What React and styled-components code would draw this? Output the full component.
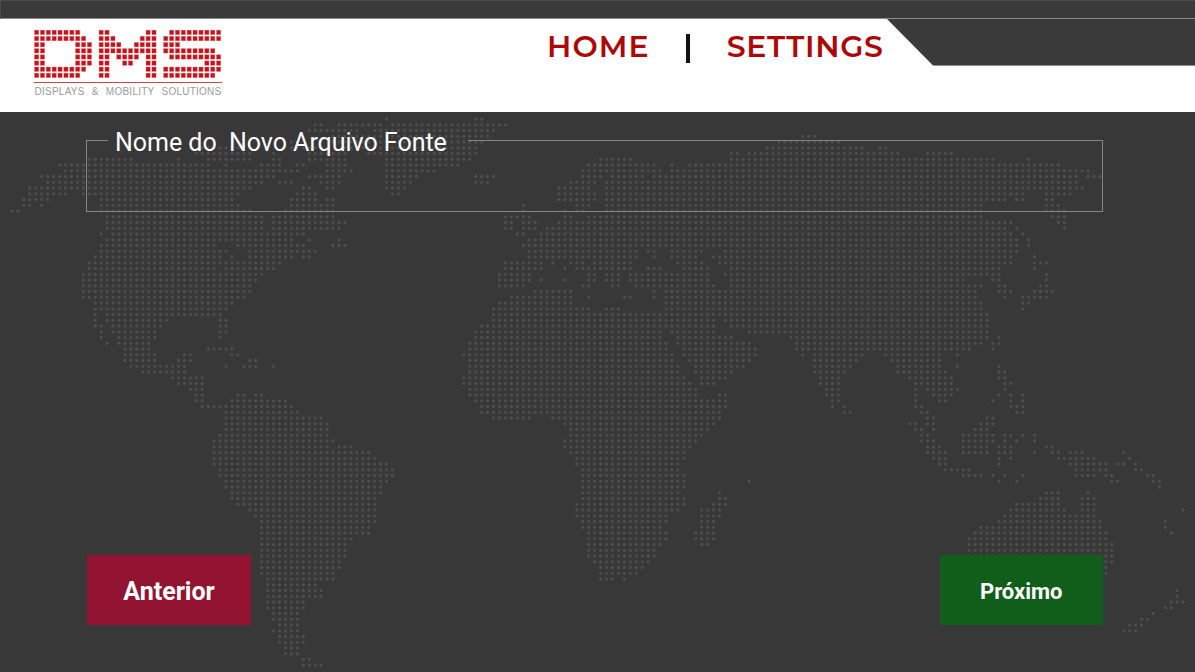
import React from "react";
import styled, { createGlobalStyle } from "styled-components";

const GlobalStyle = createGlobalStyle`
  html, body { margin: 0; padding: 0; background: #383838; }
  body { font-family: "Roboto", "Liberation Sans", sans-serif; }
`;

const northAmerica = `20:1160
38:940-965,1015-1150,1170-1200
56:925-980,995-1075,1120-1200
74:1000-1200
92:880-900,1000-1200
106:600-710,880-985,1040-1200
124:585-755,820,925-1040,1100-1200
142:260-395,535,625-755,820-840,925-1040,1160-1200
159:178-630,675,785-840,890-910,980-1040,1160-1200
177:195-895,980-1055,1160-1200
194:125-825,925-1020,1160-1200
211:140-790,835-875,960-1020,1160-1200
228:85-755,905-925,980-1000,1160-1200
245:85-195,250-720,890-945,1175-1200
262:70-145,300-700,870-945,980-1000
280:70-90,125,300-715,870-1000
297:36-52,300-750,855-1000
314:320-785,820-1000
331:320-785,820-1035
349:320-785,820-1020
366:303,338-915
383:320-880,920-930,1017
401:303-645,715-915,1000-1035
418:303-680,750-945
435:285-660,695,750-875,910-930
452:267-660,680-840
470:267-645,680-825
487:250-790
504:250-770
521:250-750
538:250-750
555:250-735
573:285-700
590:285-680
607:285,320-665
625:285,320-500,660-680
642:285-305,338-485,660-680
659:303,338-465,660-680
676:303,355-465,660
694:320,355-450
711:373-450,625-695
728:373-465,555-575,695-715
745:373-465,535-575,750-770
763:390-555,680,732-770,820
780:425-555
797:517-610
814:535-610
832:570-610`;

const southAmerica = `10:535-605
27:570-605
45:588-605,715-730,768-785
62:588-605,695-855
79:605-875
97:678-890
114:678-965
131:678-980
148:678-980
165:660-980
183:642-1000
200:642-985,1015-1050
217:642-1105
235:642-1120
252:642-1160
269:660-1178
286:660-1178
303:678-1160
320:678-1140
337:695-1140
355:695-1125
372:715-1125
389:750-1125
406:768-1125
424:785-1125
441:785-1105
459:785-1105
476:785-1050
493:785-1035
510:785-1035
527:785-1035
545:785-1015
562:785-1015
579:785-1000
596:803-1000
613:803-945
631:803-965
648:803-965
665:803-910
682:803-910
700:820-895
717:820-895
734:838-895
751:820-895
769:838-910
786:838-910
803:855-895
820:855-895
838:910-930
855:910-965`;

const europe = `20:290-305
38:0,35-380
56:0-345
73:0-325
90:0-310,1195-1260
107:0-290,1160-1260
125:35-290,1050-1075,1105-1260
142:50-275,660-755,1050-1260
159:35-240,625-825,875,925-1260
176:15-165,605-840,875-1260
194:15-110,285-340,605-665,695-790,820-1260
211:15-95,285-325,570-645,680-1260
228:15-75,535-630,680-1260
245:35-55,535-645,680-1260
262:535-645,680-1260
280:430,590-630,680-1260
297:430,555,590-610,680-1260
314:375-450,555-575,625-1260
331:375-395,430-470,535-1260
349:375-395,430-470,500-1260
366:410-430,480-1260
383:445-1260
401:430-1260
418:445-770,800-825,875-965,1035-1260
435:445-770,820,875-945,1000-1260
452:375-485,520,570-610,640-755,890-965,1015-1260
469:375-485,555,590-630,640-750,800-840,910-985,1050-1260
487:355-450,625-645,680-715,750-985,1035-1260
504:355-450,485,555,625-645,680-715,750-985,1050-1260
521:355-430,607-625,695-715,768-1000,1050-1260
538:465-575,820,855-1260
555:390-575,625,732-750,820,855-1260
573:355-575,855-1260
590:340-630,680-715,855-1260
607:340-835,855-1020,1035-1260
625:340-1000,1035-1260
642:300-1000,1050-1260
659:285-840,875-1000,1105-1210
676:285-840,890-1050,1230-1260
694:267-860,890-1110,1250
711:267-860,905-1130`;

const asia = `73:68-104
90:0-176
107:0-248,300-320
125:0-355,440-515
142:0-640,745
159:0-835
176:0-925
193:0-890,925-960
211:0-890
228:0-905
245:0-730,800-870
262:0-680,710-730,800-820
280:0-605,800-835
297:0-605,800-855
314:0-605,818-855
331:0-695,835-855
349:0-675,710,855
366:0-695,730
383:0-712,745
400:0-712,745
418:0-712
435:0-695,765
452:0-695,765-800
469:0-660,765
487:0-660,800
504:0-550,640-660,800
521:0-605,660-675,782-800
538:0-588,660-695,765-818
556:0-588,675,728-800
573:0-605,728-745
590:0-605,728
607:0-622
625:0-622
642:0-622
659:14-622
676:32-622,655
693:50-605,640-660
710:50-570,640`;

const africa = `9:90-680,715-930,1070-1200
26:90-680,732-945,1070-1105,1125-1200
44:72-695,732-945,1090,1125-1200
61:90-695,750-930,1125-1200
78:90-715,768-910,1125-1200
96:90-715,768-875,1125-1200
113:72-732,785-855,1142-1200
130:72-750,785-820,1142-1200
148:90-768,1160-1200
165:90-768,838-855,1160-1200
182:108-855,1178-1200
200:125-855,1178
217:125-838
234:160-270,340-838
251:375-820
268:392-802
285:392-785
302:375-768
320:375-750
337:392-732
354:410-732
371:410-715
389:428-715
406:428-732
423:428-732,928
440:428-732
458:428-715,838
475:428-732,838-855
492:410-732,820-855
509:410-715,785-838
526:410-680,785-838
544:428-680,785-820
561:428-660,785-820
578:445-680,768-820
595:445-680,768-820
613:445-660,785-802
630:445-642
647:445-642
664:463-625
682:480-605
699:480-588
716:480-517,553`;

const oceania = `9:8-545,580-597
26:8-510,580
44:8,44-186,258-420,472
61:44-168,276-420
78:44-150,294-420,472,597
96:44-132,294-437,597-615
113:62-114,330-455,597-615
130:62-114,348-455,615-632
148:80-114,348,384-472,615
165:80-114,348,402-455,597,632,668
182:98-114,348,420-437,580,632,668
200:98,132,348-366,632-668
216:132-150,366-384,650-668
234:384-402,562-580
251:330-348,384-402,545-580
268:348-366,402,527-562
285:366-384,490-580,615-632,668,704
302:366-402,490-580,615,650,704
320:384-420,490-562,597-632,740-758
337:384-437,490-562,597-632,704,758-776,812-848,972
354:402-437,597,632,776-884,990
371:420-437,597,812-920,954-972,1008
389:437-510,830-920,1008-1025
406:490-545,580,615,668,830-884,920-936,1044-1060
423:597,650,936-954,1060-1078
440:1078
458:740-776,866
475:722-776,848-884
492:650-776,848-884
509:632-794,848-884,1150
526:615-884
544:597-902,1096
561:545-902,1096
578:527-920,1114
596:510-920
613:510-936
630:510-936
647:510-936`;

const southPacific = `11:348-475,545-582
29:330-495,545-582,850
46:312-582
64:295-600,796
81:240-600,796
98:222-618,815
115:205-618
133:205-636
150:205-636
167:205-636
185:205-636
202:618
219:618
270:832
287:832
305:815-850
322:796-815
340:760
357:725-742
374:690-725
391:672-708`;

const COL_PITCH = 5.945;
const ROW_PITCH = 5.75;
const COL_ORIGIN = 12;
const ROW_ORIGIN = 119;

function buildDots() {
  const sources = [
    [northAmerica, 0, 112],
    [southAmerica, 0, 380],
    [europe, 380, 112],
    [asia, 780, 112],
    [africa, 440, 340],
    [oceania, 800, 340],
    [southPacific, 900, 500],
  ];
  const cells = new Set();
  const col = (v, ox) => Math.round((v / 3 + ox - COL_ORIGIN) / COL_PITCH);
  sources.forEach(([text, ox, oy]) => {
    text.split("\n").forEach((line) => {
      const [y, spans] = line.split(":");
      const row = Math.round((Number(y) / 3 + oy - ROW_ORIGIN) / ROW_PITCH);
      spans.split(",").forEach((span) => {
        const [a, b] = span.split("-").map(Number);
        const from = col(a, ox);
        const to = b === undefined ? from : col(b, ox);
        for (let c = from; c <= to; c++) cells.add(`${c}|${row}`);
      });
    });
  });
  let d = "";
  cells.forEach((key) => {
    const [c, r] = key.split("|").map(Number);
    d += `M${(COL_ORIGIN + c * COL_PITCH).toFixed(1)} ${(ROW_ORIGIN + r * ROW_PITCH).toFixed(1)}h0`;
  });
  return d;
}

const dotPath = buildDots();

const logoRows = [
  [[0, 7], [11, 12], [19, 20], [23, 31]],
  [[0, 8], [11, 13], [18, 20], [22, 31]],
  [[0, 1], [7, 9], [11, 14], [17, 20], [22, 24]],
  [[0, 1], [7, 9], [11, 20], [22, 30]],
  [[0, 1], [7, 9], [11, 12], [14, 17], [19, 20], [23, 31]],
  [[0, 1], [7, 9], [11, 12], [15, 16], [19, 20], [29, 31]],
  [[0, 8], [11, 12], [19, 20], [22, 31]],
  [[0, 7], [11, 12], [19, 20], [22, 30]],
];

const Page = styled.div`
  position: relative;
  width: 1195px;
  height: 672px;
  overflow: hidden;
  background: #383838;
  display: flex;
  flex-direction: column;
`;

const TopStrip = styled.div`
  height: 17px;
  flex: none;
  background: #3a3a3a;
  border-top: 1px solid #4a4a4a;
  border-left: 1px solid #4a4a4a;
  border-bottom: 1px solid #8a8a8a;
`;

const Header = styled.header`
  position: relative;
  z-index: 1;
  flex: none;
  height: 93px;
  background: #fff;
  display: flex;
  align-items: flex-start;
`;

const Notch = styled.div`
  position: absolute;
  top: 0;
  right: 0;
  width: 308px;
  height: 47px;
  background: linear-gradient(#3a3a3a calc(100% - 1px), #8a8a8a 0);
  clip-path: polygon(0 0, 100% 0, 100% 100%, 46.5px 100%);
`;

const Brand = styled.div`
  margin: 10px 0 0 34px;
  width: 188px;
  display: flex;
  flex-direction: column;
`;

const LogoMark = styled.svg`
  display: block;
  width: 188px;
  height: 49px;
`;

const BrandRule = styled.div`
  height: 1px;
  margin-top: 4px;
  background: #db4045;
`;

const BrandTag = styled.div`
  margin-top: 2px;
  padding-left: 0.5px;
  font-family: "Liberation Sans", Arial, sans-serif;
  font-size: 10px;
  line-height: 13px;
  color: #9a9a9a;
  white-space: pre;
  letter-spacing: 0.25px;
  word-spacing: 4.1px;
`;

const Nav = styled.nav`
  margin: 9px 0 0 325px;
  display: flex;
  align-items: center;
  height: 38px;
`;

const NavLink = styled.a`
  font-family: "Montserrat", "Inter", sans-serif;
  font-size: 30px;
  font-weight: 600;
  line-height: 38px;
  letter-spacing: ${(p) => p.$spacing}px;
  color: #ad0808;
`;

const NavDivider = styled.span`
  width: 4px;
  height: 29px;
  margin: 2px 37px 0 36px;
  background: #111;
`;

const Content = styled.main`
  position: relative;
  flex: 1;
  padding: 12px 92px 46.7px 86px;
  display: flex;
  flex-direction: column;
  justify-content: space-between;
`;

const WorldMap = styled.svg`
  position: absolute;
  top: 0;
  left: 0;
  width: 1195px;
  height: 672px;
`;

const Field = styled.fieldset`
  position: relative;
  margin: 0;
  padding: 0;
  height: 88px;
  box-sizing: border-box;
  border: 1px solid #858585;
`;

const FieldLegend = styled.legend`
  margin-left: 21px;
  padding: 5px 21px 0 7px;
  font-family: "Roboto", sans-serif;
  font-size: 25px;
  line-height: 28px;
  letter-spacing: -0.03px;
  color: #fff;
  white-space: pre;
`;

const Actions = styled.div`
  position: relative;
  display: flex;
  justify-content: space-between;
  padding-left: 1.3px;
`;

const ActionButton = styled.button`
  width: 163.5px;
  height: 70.3px;
  border: 0;
  padding: 2px 0 0;
  background: ${(p) => p.$bg};
  color: #fff;
  font-family: "Roboto", sans-serif;
  font-weight: 700;
  font-size: ${(p) => p.$size}px;
`;

export default function App() {
  return (
    <Page>
      <GlobalStyle />
      <WorldMap viewBox="0 0 1195 672" aria-hidden="true">
        <path d={dotPath} stroke="#4d4d4d" strokeWidth="3.3" strokeLinecap="round" fill="none" />
      </WorldMap>
      <TopStrip />
      <Header>
        <Notch />
        <Brand>
          <LogoMark viewBox="0 0 188 49" aria-label="DMS">
            {logoRows.flatMap((spans, r) =>
              spans.flatMap(([from, to]) =>
                Array.from({ length: to - from + 1 }, (_, i) => (
                  <rect
                    key={`${r}-${from + i}`}
                    x={(from + i) * 5.87 + 0.5}
                    y={r * 6.14 + 1.2}
                    width="4.2"
                    height="4.4"
                    fill="#c5121b"
                    stroke="#d9555a"
                    strokeOpacity="0.45"
                    strokeWidth="0.7"
                  />
                ))
              )
            )}
          </LogoMark>
          <BrandRule />
          <BrandTag>DISPLAYS &amp; MOBILITY SOLUTIONS</BrandTag>
        </Brand>
        <Nav>
          <NavLink $spacing={1.1}>HOME</NavLink>
          <NavDivider />
          <NavLink $spacing={0.7}>SETTINGS</NavLink>
        </Nav>
      </Header>
      <Content>
        <Field>
          <FieldLegend>{"Nome do  Novo Arquivo Fonte"}</FieldLegend>
        </Field>
        <Actions>
          <ActionButton $bg="#921332" $size={25}>Anterior</ActionButton>
          <ActionButton $bg="#115e1a" $size={22}>Próximo</ActionButton>
        </Actions>
      </Content>
    </Page>
  );
}
